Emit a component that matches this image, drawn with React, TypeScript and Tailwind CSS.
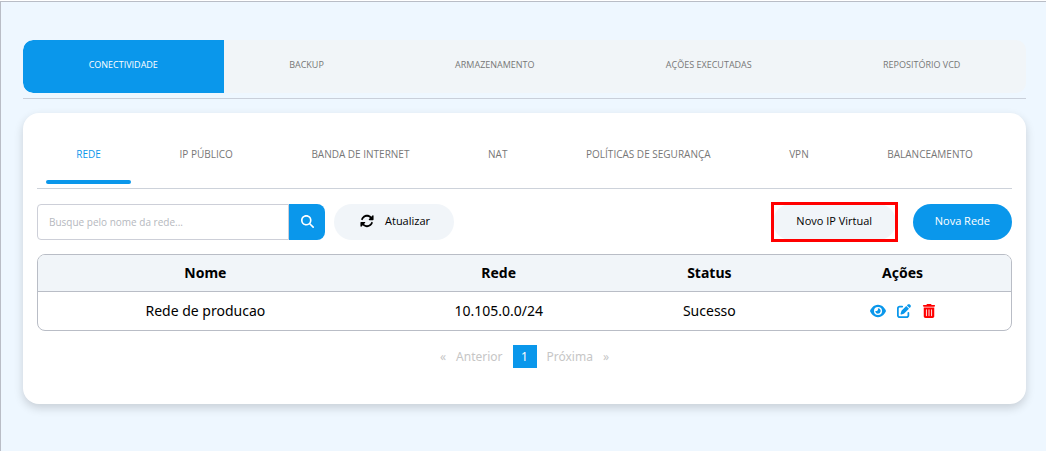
import React, { useState } from 'react';
import { FaEye, FaMagnifyingGlass, FaPenToSquare, FaRotate, FaTrashCan } from 'react-icons/fa6';

const sections = ['CONECTIVIDADE', 'BACKUP', 'ARMAZENAMENTO', 'AÇÕES EXECUTADAS', 'REPOSITÓRIO VCD'];

const networkTabs = [
  'REDE',
  'IP PÚBLICO',
  'BANDA DE INTERNET',
  'NAT',
  'POLÍTICAS DE SEGURANÇA',
  'VPN',
  'BALANCEAMENTO',
];

const networks = [{ name: 'Rede de producao', address: '10.105.0.0/24', status: 'Sucesso' }];

const App: React.FC = () => {
  const [section, setSection] = useState('CONECTIVIDADE');
  const [tab, setTab] = useState('REDE');
  const [search, setSearch] = useState('');

  const rows = networks.filter((n) => n.name.toLowerCase().includes(search.toLowerCase()));

  return (
    <div className="min-h-screen bg-white pt-px font-['Open_Sans','Noto_Sans',sans-serif] text-black">
      <div className="min-h-[calc(100vh-1px)] border-t border-l border-[#b9bdc6] bg-[#eef7ff] pt-[38px] pr-5 pb-10 pl-[22px]">
        {/* Main sections */}
        <nav className="border-b border-[#c9cfda] pb-[5px]">
          <div className="flex overflow-hidden rounded-[10px] bg-[#f1f5f8]">
            {sections.map((item) => (
              <button
                key={item}
                onClick={() => setSection(item)}
                className={`h-[53px] flex-auto pb-1 text-[9px] ${
                  section === item ? 'rounded-l-[10px] bg-[#0a97eb] text-white' : 'text-[#777777]'
                }`}
              >
                {item}
              </button>
            ))}
          </div>
        </nav>

        <main className="mt-3.5 rounded-2xl bg-white px-3.5 pt-4 pb-9 shadow-[0_4px_10px_rgba(0,0,0,0.16)]">
          {/* Network tabs */}
          <nav className="flex border-b border-[#cdd2da]">
            {networkTabs.map((item) => (
              <button
                key={item}
                onClick={() => setTab(item)}
                className={`flex flex-auto flex-col px-[9px] pb-1 text-[10px] ${
                  tab === item ? 'text-[#0a97eb]' : 'text-[#777777]'
                }`}
              >
                <span className="flex h-[51px] w-full items-center justify-center">{item}</span>
                <span className={`h-1 w-full rounded-full ${tab === item ? 'bg-[#0a97eb]' : 'bg-transparent'}`}></span>
              </button>
            ))}
          </nav>

          {/* Search and actions */}
          <div className="mt-[15px] flex items-center justify-between">
            <div className="flex items-center">
              <input
                type="text"
                aria-label="Busque pelo nome da rede"
                placeholder="Busque pelo nome da rede..."
                value={search}
                onChange={(e) => setSearch(e.target.value)}
                className="h-9 w-[252px] rounded-l border border-[#cdcfd8] px-[11px] text-[10px] outline-none placeholder:text-[#b5b8be]"
              />
              <button
                aria-label="Buscar"
                className="flex h-9 w-9 items-center justify-center rounded-r-lg bg-[#0a97eb] pb-0.5 text-white"
              >
                <FaMagnifyingGlass className="text-[13px]" />
              </button>
              <button className="ml-[9px] flex h-9 items-center gap-[11px] rounded-full bg-[#f1f5f9] pr-6 pb-0.5 pl-[26px] text-[11px] font-medium">
                <FaRotate className="text-[14px]" />
                Atualizar
              </button>
            </div>
            <div className="flex items-center gap-[17px]">
              <div className="outline-3 -outline-offset-1 outline-[#ff0000]">
                <button className="h-9 min-w-[123px] rounded-full bg-[#f1f5f9] px-5 pb-0.5 text-[11px] font-medium">
                  Novo IP Virtual
                </button>
              </div>
              <button className="h-9 rounded-full bg-[#0a97eb] px-[22px] pb-0.5 text-[11px] font-medium text-white">
                Nova Rede
              </button>
            </div>
          </div>

          {/* Networks */}
          <div className="mt-3.5 overflow-hidden rounded-lg border border-[#b9bdc6]">
            <table className="w-full table-fixed text-center font-['Noto_Sans','Open_Sans',sans-serif] text-[14px]">
              <thead className="bg-[#f1f5f9]">
                <tr className="h-9 border-b border-[#b9bdc6]">
                  <th className="w-[34.4%]">Nome</th>
                  <th className="w-[25.9%]">Rede</th>
                  <th className="w-[17.4%]">Status</th>
                  <th className="w-[22.3%]">Ações</th>
                </tr>
              </thead>
              <tbody>
                {rows.map((network) => (
                  <tr key={network.name} className="h-[39px]">
                    <td>{network.name}</td>
                    <td>{network.address}</td>
                    <td>{network.status}</td>
                    <td>
                      <div className="flex items-center justify-center gap-[11px] text-[14px] text-[#0a97eb]">
                        <button aria-label="Visualizar">
                          <FaEye className="text-[16px]" />
                        </button>
                        <button aria-label="Editar">
                          <FaPenToSquare />
                        </button>
                        <button aria-label="Excluir" className="text-[#ff0000]">
                          <FaTrashCan />
                        </button>
                      </div>
                    </td>
                  </tr>
                ))}
              </tbody>
            </table>
          </div>

          {/* Pagination */}
          <div className="mt-3.5 flex items-center justify-center gap-2.5 font-['Noto_Sans','Open_Sans',sans-serif] text-[12px] text-[#c6c6c6]">
            <button className="flex gap-2.5">
              <span>«</span>
              <span>Anterior</span>
            </button>
            <button className="h-[23px] w-6 bg-[#0a97eb] text-white">1</button>
            <button className="flex gap-2.5">
              <span>Próxima</span>
              <span>»</span>
            </button>
          </div>
        </main>
      </div>
    </div>
  );
};

export default App;
